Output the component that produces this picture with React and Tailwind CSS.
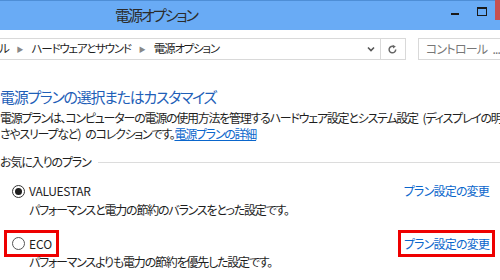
export default function App() {
  const jp = "font-['Noto_Sans_CJK_JP','Noto_Sans',sans-serif] [font-feature-settings:'palt']";
  return (
    <div className={`w-[500px] h-[280px] overflow-hidden bg-white relative ${jp} text-[#1e1e1e]`}>
      {/* title bar */}
      <div className="h-[30px] bg-[#69abf5] border-t border-[#4e8ed6] flex items-start">
        <div className="pl-[115px] pt-[4px] text-[15px] leading-[20px] tracking-[-2px] text-[#2b2b2b]">電源オプション</div>
        <div className="ml-auto flex items-start">
          <div className="mt-[12px] w-[8px] h-[2px] bg-[#1a1a1a] mr-[18px]" />
          <div className="mt-[6px] w-[10px] h-[9px] border border-t-2 border-[#1a1a1a] mr-[8px]" />
          <div className="-mt-px w-[5px] h-[20px] bg-[#c75050]" />
        </div>
      </div>
      {/* address row */}
      <div className="mt-[8px] flex items-stretch h-[22px]">
        <div className="w-[382px] border border-l-0 border-[#d9d9d9] flex items-center text-[11.5px] tracking-[-1.2px] whitespace-nowrap">
          <span className="-ml-[1px]">ル</span>
          <span className="mx-[8px] text-[7px] text-[#888] tracking-normal">▶</span>
          <span>ハードウェアとサウンド</span>
          <span className="mx-[8px] text-[7px] text-[#888] tracking-normal">▶</span>
          <span>電源オプション</span>
          <svg className="ml-auto mr-[5px]" width="8" height="6" viewBox="0 0 8 6">
            <path d="M1 1.5 L4 4.5 L7 1.5" stroke="#555" strokeWidth="1.6" fill="none" />
          </svg>
        </div>
        <div className="w-[25px] border border-l-0 border-[#d9d9d9] flex items-center justify-center">
          <svg width="11" height="11" viewBox="0 0 12 12">
            <path d="M9.5 6 A3.6 3.6 0 1 1 7.5 2.8" stroke="#666" strokeWidth="1.6" fill="none" />
            <path d="M6.2 0.8 L9.6 2.6 L6.6 4.8 Z" fill="#666" />
          </svg>
        </div>
        <div className="ml-[12px] flex-1 border border-r-0 border-[#d9d9d9] flex items-center pl-[7px] text-[12px] tracking-[-0.8px] text-[#777] whitespace-nowrap">
          コントロール{"\u2002"}...
        </div>
      </div>
      {/* content */}
      <div className="mt-[26px] whitespace-nowrap">
        <div className="text-[15px] leading-[22px] tracking-[-1.3px] text-[#1f5fb8]">電源プランの選択またはカスタマイズ</div>
        <div className="mt-[2px] text-[12px] leading-[16px] tracking-[-1.25px]">
          <div>電源プランは、コンピューターの電源の使用方法を管理するハードウェア設定とシステム設定{"\u2002"}(ディスプレイの明るさ</div>
          <div>
            さやスリープなど){"\u2002"}のコレクションです。<span className="text-[#0a66cc] underline">電源プランの詳細</span>
          </div>
        </div>
        <div className="mt-[12px] flex items-center text-[12px] leading-[16px] tracking-[-1.1px]">
          <span>お気に入りのプラン</span>
          <div className="ml-[7px] flex-1 h-px bg-[#dcdcdc]" />
        </div>
        {/* plan 1 */}
        <div className="mt-[13px] flex items-center text-[12px] leading-[16px]">
          <div className="ml-[12px] w-[13px] h-[13px] rounded-full border border-[#333] flex items-center justify-center">
            <div className="w-[7px] h-[7px] rounded-full bg-[#1e1e1e]" />
          </div>
          <span className="ml-[4px] tracking-[-0.3px]">VALUESTAR</span>
          <span className="ml-auto mr-[11px] text-[#0a66cc] tracking-[-0.8px]">プラン設定の変更</span>
        </div>
        <div className="mt-[3px] pl-[29px] text-[12px] leading-[16px] tracking-[-1.2px]">パフォーマンスと電力の節約のバランスをとった設定です。</div>
        {/* plan 2 */}
        <div className="mt-[12px] flex items-center text-[12px] leading-[16px]">
          <div className="ml-[4px] w-[55px] h-[27px] border-[3px] border-[#ee0000] flex items-center">
            <div className="ml-[5px] w-[13px] h-[13px] rounded-full border border-[#555]" />
            <span className="ml-[4px]">ECO</span>
          </div>
          <div className="ml-auto mr-[5px] w-[97px] h-[27px] border-[3px] border-[#ee0000] flex items-center justify-center">
            <span className="text-[#0a66cc] tracking-[-0.8px]">プラン設定の変更</span>
          </div>
        </div>
        <div className="-mt-[3px] pl-[29px] text-[12px] leading-[16px] tracking-[-1.2px]">パフォーマンスよりも電力の節約を優先した設定です。</div>
      </div>
    </div>
  );
}
